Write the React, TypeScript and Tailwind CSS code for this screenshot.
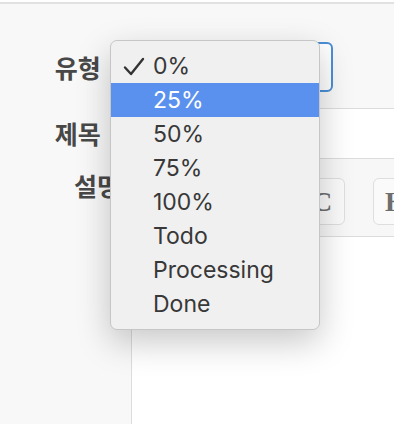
const options = ["0%", "25%", "50%", "75%", "100%", "Todo", "Processing", "Done"];

function Label({ text, required }: { text: string; required?: boolean }) {
  return (
    <div className="w-[131px] shrink-0 pr-[11px] text-right text-[25px] font-bold leading-none text-[#484848] [font-family:'Noto_Sans_CJK_KR','Noto_Sans',sans-serif]">
      {text}
      {required && <span className="ml-[10px] text-[18px] text-[#d0021b]">*</span>}
    </div>
  );
}

function ToolButton({ letter }: { letter: string }) {
  return (
    <div className="flex h-[47px] w-[46px] shrink-0 items-center justify-center rounded-md border border-[#dedede] bg-[#fafafa] text-[28px] font-bold text-[#6e6e6e] [font-family:'Liberation_Serif',serif]">
      {letter}
    </div>
  );
}

function SelectMenu() {
  return (
    <div className="absolute left-[110px] top-[40px] w-[210px] rounded-[7px] border border-[#c6c6c6] bg-[#f0f0f0] py-[8px] shadow-[0_12px_34px_rgba(0,0,0,0.22)] [font-family:Inter,'Noto_Sans',sans-serif]">
      {options.map((o, i) => (
        <div
          key={o}
          className={
            i === 1
              ? "relative flex h-[34px] items-center bg-[#5b91ee] pl-[42px] text-[23px] text-white"
              : "relative flex h-[34px] items-center pl-[42px] text-[23px] text-[#383838]"
          }
        >
          {i === 0 && (
            <svg className="absolute left-[12px] top-[8px]" width="22" height="20" viewBox="0 0 22 20" fill="none">
              <path d="M2 10.5 L8 17 L20 2" stroke="#333" strokeWidth="2.4" strokeLinecap="round" strokeLinejoin="round" />
            </svg>
          )}
          {o}
        </div>
      ))}
    </div>
  );
}

export default function App() {
  return (
    <div className="relative h-[424px] w-[394px] overflow-hidden bg-white pt-[2px]">
      <div className="flex h-full flex-col border-t-2 border-[#e2e2e2] bg-[#f8f8f8]">
        <div className="flex items-center pb-[16px] pt-[38px]">
          <Label text="유형" required />
          <div className="ml-[9px] h-[50px] w-[193px] rounded-md border-2 border-[#4a8fd6] bg-white" />
        </div>
        <div className="flex h-[50px] items-center">
          <Label text="제목" required />
          <div className="h-full flex-1 border-l border-t border-[#dcdcdc] bg-white" />
        </div>
        <div className="flex flex-1">
          <div className="pt-[15px]">
            <Label text="설명" />
          </div>
          <div className="flex flex-1 flex-col border-l border-[#dcdcdc] bg-white">
            <div className="flex gap-[28px] overflow-hidden border-y border-[#dcdcdc] bg-[#f7f7f7] pb-[11px] pl-[19px] pt-[19px]">
              <ToolButton letter="B" />
              <ToolButton letter="I" />
              <ToolButton letter="C" />
              <ToolButton letter="H" />
            </div>
            <div className="flex-1 bg-white" />
          </div>
        </div>
      </div>
      <SelectMenu />
    </div>
  );
}
